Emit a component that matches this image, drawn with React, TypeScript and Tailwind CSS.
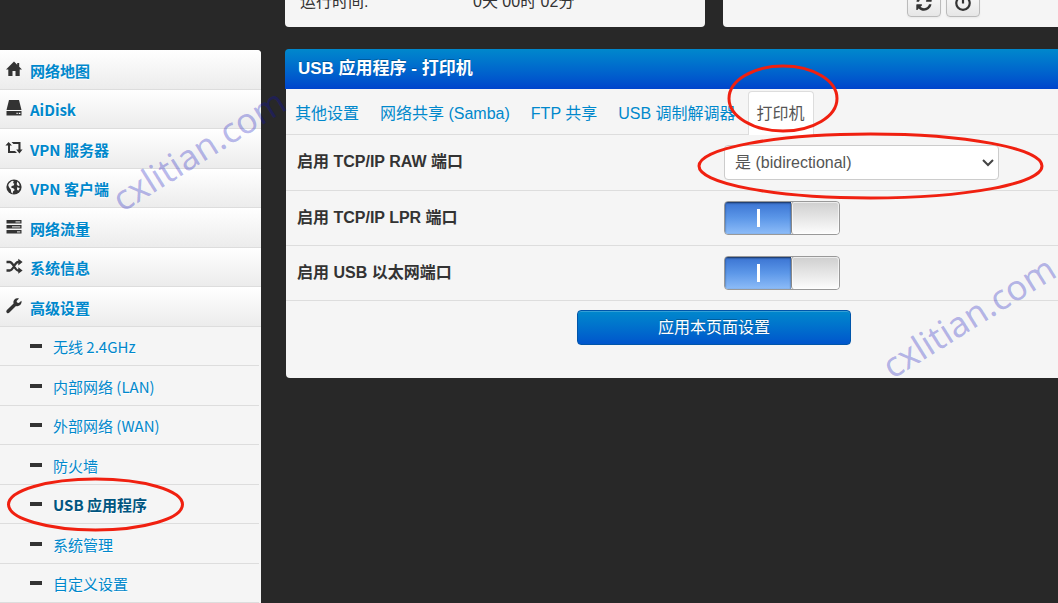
import React, { useState } from "react";

interface MenuItem {
  name: string;
  icon: React.ReactNode;
}

const menuItems: MenuItem[] = [
  {
    name: "网络地图",
    icon: <path d="M8 0.5 0 8.6h2.3V15h4.2v-5h3v5h4.2V8.6H16L13.2 5.8V2h-2v1.8z" />,
  },
  {
    name: "AiDisk",
    icon: (
      <>
        <path d="M3 0h10l2.5 10H.5z" />
        <path d="M.5 11h15v4.5H.5z" />
        <path d="M10.5 12.7h1.2v1.2h-1.2zM12.8 12.7h1.6v1.2h-1.6z" fill="#fff" />
      </>
    ),
  },
  {
    name: "VPN 服务器",
    icon: (
      <path d="M2.600 2 6 5.600H4V11h5l2 2H2V5.600H-.6zM5.500 2h9V9.600h2.100L13.400 13.500 10.200 9.600h2.200V4.100h-5z" />
    ),
  },
  {
    name: "VPN 客户端",
    icon: (
      <>
        <circle cx="8" cy="8" r="7.600" />
        <path
          d="M3.200 4.300 6 1.800l1.800.4L7 4l1.300.8-.6 1.600-2 .7-.6 1.500 2.600.8 1 1.500-1.700 1.600-.3 2.200-1.500-1.500-.4-2.800L3 8.300 2.200 6zM11.200 2.600l1.600 1.600.9 2.200-1.600.5-1.400-1.700zM11 8.300l2.800.7-1.300 2.600-1.400-.7z"
          fill="#f6f6f6"
        />
      </>
    ),
  },
  {
    name: "网络流量",
    icon: (
      <>
        <path d="M.5 1h15v3.600H.5zM.5 6h15v3.600H.5zM.5 11h15v3.600H.5z" />
        <path d="M9.500 2.200h4.800v1.200H9.500zM6 7.200h8.300v1.200H6zM11 12.200h3.300v1.200H11z" fill="#ccc" />
      </>
    ),
  },
  {
    name: "系统信息",
    icon: (
      <>
        <path
          d="M.5 4h3.200c3.500 0 5 8.500 8.400 8.500h1M.5 12.500h3.200C7.200 12.500 8.700 4 12.100 4h1"
          fill="none"
          stroke="#333"
          strokeWidth="2.300"
        />
        <path d="M12.300.8 16.600 4l-4.300 3.400zM12.300 9.200l4.300 3.300-4.300 3.200z" />
      </>
    ),
  },
  {
    name: "高级设置",
    icon: (
      <path d="M15.400 2.800 12.800 5 11 4.600 10.600 2.900 13 .6C11.300 0 9.600.3 8.500 1.500 7.400 2.600 7.200 4.100 7.600 5.400L.9 12.100c-.8.8-.8 1.900-.1 2.600.7.700 1.800.7 2.600-.1L10 8c1.400.5 3 .2 4.200-.9 1.100-1.200 1.700-2.800 1.200-4.300z" />
    ),
  },
];

const subItems = ["无线 2.4GHz", "内部网络 (LAN)", "外部网络 (WAN)", "防火墙", "USB 应用程序", "系统管理", "自定义设置"];

const tabs = ["其他设置", "网络共享 (Samba)", "FTP 共享", "USB 调制解调器", "打印机"];

const Sidebar: React.FC = () => (
  <nav
    aria-label="Main menu"
    className="w-[261px] shrink-0 pt-[50px] text-[15px] leading-5 font-['Noto_Sans_CJK_SC',sans-serif]"
  >
    <ul className="overflow-hidden rounded-tr bg-[#f5f5f5] [text-shadow:0_1px_0_#fff]">
      {menuItems.map(({ name, icon }) => (
        <li
          key={name}
          className="border-b border-[#ddd] bg-linear-to-b from-white to-[#ececec] odd:h-[40px] even:h-[39px]"
        >
          <a href="#" className="flex h-full items-center gap-2 pl-1.5 font-bold text-[#0088cc]">
            <svg viewBox="0 0 16 16" fill="#333" className="mb-0.5 h-4 w-4 overflow-visible" aria-hidden="true">
              {icon}
            </svg>
            <span className="pt-0.5">{name}</span>
          </a>
        </li>
      ))}
    </ul>
    <ul className="bg-[#f5f5f5] pr-0.5 [text-shadow:0_1px_0_#fff]">
      {subItems.map((name) => (
        <li key={name} className="border-b border-[#ddd] odd:h-[39px] even:h-[40px]">
          <a
            href="#"
            className={
              name === "USB 应用程序"
                ? "flex h-full items-center gap-[11px] pl-[30px] font-bold text-[#005580]"
                : "flex h-full items-center gap-[11px] pl-[30px] text-[#0088cc]"
            }
          >
            <span className="h-1 w-3 bg-[#333]" />
            <span className="pt-0.5">{name}</span>
          </a>
        </li>
      ))}
    </ul>
  </nav>
);

const iconButton =
  "flex h-[30px] w-[34px] items-end justify-center rounded border border-[#bbb] bg-linear-to-b from-white to-[#e6e6e6] pb-1 shadow-xs";

const StatusCards: React.FC = () => (
  <div className="grid h-[27px] grid-cols-2 grid-rows-[27px] items-end gap-[18px] overflow-hidden">
    <div className="grid h-10 grid-cols-[173px_1fr] items-end rounded-b bg-[#f5f5f5] pb-[15px] pl-[15px] leading-5">
      <span>运行时间:</span>
      <span>0天 00时 02分</span>
    </div>
    <div className="flex h-10 items-end gap-[5px] rounded-b bg-[#f5f5f5] pb-[10px] pl-[184px]">
      <button type="button" aria-label="Refresh" className={iconButton}>
        <svg viewBox="0 0 1792 1792" fill="#333" className="h-[18px] w-[18px]">
          <path d="M1639 1056q0 5-1 7-64 268-268 434.500t-478 166.500q-146 0-282.500-55t-243.500-157l-129 129q-19 19-45 19t-45-19-19-45v-448q0-26 19-45t45-19h448q26 0 45 19t19 45-19 45l-137 137q71 66 161 102t187 36q134 0 250-65t186-179q11-17 53-117 8-23 30-23h192q13 0 22.500 9.500t9.500 22.500zm25-800v448q0 26-19 45t-45 19h-448q-26 0-45-19t-19-45 19-45l138-138q-148-137-349-137-134 0-250 65t-186 179q-11 17-53 117-8 23-30 23h-199q-13 0-22.500-9.500t-9.500-22.500v-7q65-268 270-434.500t480-166.500q146 0 284 55.500t245 156.500l130-129q19-19 45-19t45 19 19 45z" />
        </svg>
      </button>
      <button type="button" aria-label="Power" className={iconButton}>
        <svg viewBox="0 0 18 18" fill="none" stroke="#333" strokeWidth="2.200" className="h-[18px] w-[18px]">
          <path d="M9 1v8.500M5.500 3.500a6.700 6.700 0 1 0 7 0" />
        </svg>
      </button>
    </div>
  </div>
);

interface ToggleProps {
  id: string;
}

const Toggle: React.FC<ToggleProps> = ({ id }) => {
  const [on, setOn] = useState(true);

  return (
    <label
      htmlFor={id}
      className="relative flex h-[34px] w-[116px] cursor-pointer overflow-hidden rounded border border-[#999] bg-[#eee]"
    >
      <input id={id} type="checkbox" checked={on} onChange={() => setOn(!on)} className="peer sr-only" />
      <span className="flex w-[66px] items-center justify-center bg-linear-to-b from-[#3a73d2] via-[#5c97e8] to-[#8dbcf8] shadow-[inset_0_1px_2px_rgba(0,0,0,0.6)] peer-[:not(:checked)]:order-2 peer-[:not(:checked)]:from-gray-200 peer-[:not(:checked)]:to-white">
        <span className="h-[18px] w-[3px] bg-white" />
      </span>
      <span className="flex-1 rounded-[3px] border-l border-[#888] bg-linear-to-b from-[#cfcfcf] to-[#fdfdfd] shadow-[inset_0_0_0_1px_rgba(255,255,255,0.6)]" />
    </label>
  );
};

const rowClass = "grid grid-cols-2 border-b border-[#ddd] py-2.5";
const labelClass = "pl-[11px] pt-[7px] font-bold leading-5";

const PrinterPanel: React.FC = () => {
  const [raw, setRaw] = useState("2");

  return (
    <section className="mt-[22px]">
      <h2 className="flex h-10 items-center rounded-t bg-linear-to-b from-[#0088cc] to-[#0044cc] pl-[13px] text-[17px] leading-5 font-bold text-white [text-shadow:0_-1px_0_rgba(0,0,0,0.25)]">
        USB 应用程序 - 打印机
      </h2>
      <form className="ml-px rounded-b bg-[#f5f5f5] pb-[33px]" onSubmit={(e) => e.preventDefault()}>
        <ul className="flex gap-[3px] border-b border-[#ddd] pt-0.5 leading-5">
          {tabs.map((name) => (
            <li key={name} className="-mb-px">
              <a
                href="#"
                className={
                  name === "打印机"
                    ? "block rounded-t border border-b-0 border-[#ddd] bg-white px-2 pt-3 pb-[11px] text-[#555]"
                    : "block border border-transparent px-2 pt-3 pb-2.5 text-[#0088cc]"
                }
              >
                {name}
              </a>
            </li>
          ))}
        </ul>
        <div className={rowClass}>
          <label htmlFor="raw" className={labelClass}>
            启用 TCP/IP RAW 端口
          </label>
          <div className="relative ml-2.5 w-[275px]">
            <select
              id="raw"
              value={raw}
              onChange={(e) => setRaw(e.target.value)}
              className="block h-[35px] w-full appearance-none rounded border border-[#ccc] bg-white pl-2.5 text-[#555]"
            >
              <option value="0">否</option>
              <option value="1">是</option>
              <option value="2">是 (bidirectional)</option>
            </select>
            <svg
              viewBox="0 0 12 8"
              fill="none"
              stroke="#444"
              strokeWidth="2"
              className="pointer-events-none absolute top-[14px] right-[5px] h-2 w-3"
            >
              <path d="M1 1l5 5 5-5" />
            </svg>
          </div>
        </div>
        <div className={rowClass}>
          <label htmlFor="lpr" className={labelClass}>
            启用 TCP/IP LPR 端口
          </label>
          <div className="pl-2.5">
            <Toggle id="lpr" />
          </div>
        </div>
        <div className={rowClass}>
          <label htmlFor="u2ec" className={labelClass}>
            启用 USB 以太网端口
          </label>
          <div className="pl-2.5">
            <Toggle id="u2ec" />
          </div>
        </div>
        <div className="flex justify-center pt-[9px]">
          <button
            type="submit"
            className="h-[35px] w-[274px] rounded border border-[#0055aa] bg-linear-to-b from-[#0088cc] to-[#0055cc] leading-5 text-white shadow-[inset_0_1px_0_rgba(255,255,255,0.2)] [text-shadow:0_-1px_0_rgba(0,0,0,0.25)]"
          >
            应用本页面设置
          </button>
        </div>
      </form>
    </section>
  );
};

// red marker rings and the two site watermarks, drawn over the page
const Annotations: React.FC = () => (
  <div className="pointer-events-none absolute inset-0 overflow-hidden">
    <svg width="1058" height="603" fill="none" stroke="#f02010" strokeWidth="3" className="absolute top-0 left-0">
      <ellipse cx="783" cy="98.500" rx="54" ry="32.500" />
      <ellipse cx="870.500" cy="166" rx="171.500" ry="32" />
      <ellipse cx="95.500" cy="504.500" rx="87" ry="25.500" />
    </svg>
    <span className="absolute top-[174px] left-[128px] origin-bottom-left -rotate-32 font-['Noto_Sans',sans-serif] text-[35px] leading-[48px] text-[rgba(15,15,190,0.3)]">
      cxlitian.com
    </span>
    <span className="absolute top-[341px] left-[898px] origin-bottom-left -rotate-32 font-['Noto_Sans',sans-serif] text-[35px] leading-[48px] text-[rgba(15,15,190,0.3)]">
      cxlitian.com
    </span>
  </div>
);

const App: React.FC = () => {
  return (
    <div className="relative flex h-screen gap-6 overflow-hidden bg-[#282828] font-['Liberation_Sans','Noto_Sans_CJK_SC',sans-serif] text-base text-[#333]">
      <Sidebar />
      <main className="min-w-[857px] flex-1">
        <StatusCards />
        <PrinterPanel />
      </main>
      <Annotations />
    </div>
  );
};

export default App;
